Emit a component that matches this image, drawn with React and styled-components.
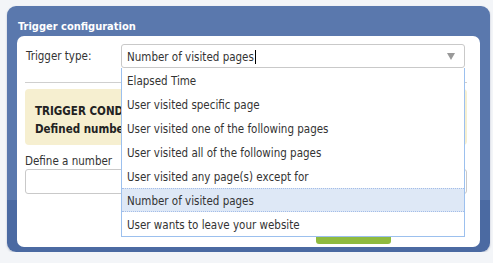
import React from 'react';
import styled, { createGlobalStyle } from 'styled-components';

const GlobalStyle = createGlobalStyle`
  html, body {
    margin: 0;
    padding: 0;
    background: #f3f5f8;
  }
  body {
    font-family: "DejaVu Sans Condensed", "DejaVu Sans", sans-serif;
    font-size: 11.5px;
    color: #333;
  }
`;

const options = [
  'Elapsed Time',
  'User visited specific page',
  'User visited one of the following pages',
  'User visited all of the following pages',
  'User visited any page(s) except for',
  'Number of visited pages',
  'User wants to leave your website',
];

const App = () => {
  const selected = 'Number of visited pages';

  return (
    <>
      <GlobalStyle />
      <Page>
        <Panel>
          <PanelTitle>Trigger configuration</PanelTitle>
          <PanelBody>
            <TypeRow>
              <Label>Trigger type:</Label>
              <SelectWrap>
                <Select>
                  <span>{selected}</span>
                  <Caret />
                  <Arrow />
                </Select>
                <Dropdown>
                  {options.map((o) => (
                    <Option key={o} active={o === selected}>
                      {o}
                    </Option>
                  ))}
                </Dropdown>
              </SelectWrap>
            </TypeRow>
            <Divider />
            <Alert>
              <div>TRIGGER CONDITION</div>
              <div>Defined number of visited pages</div>
            </Alert>
            <FieldLabel>Define a number</FieldLabel>
            <Input />
            <Footer>
              <SaveButton>Save</SaveButton>
            </Footer>
          </PanelBody>
        </Panel>
      </Page>
    </>
  );
};

export default App;

const Page = styled.div`
  padding: 6px 3px 0 7px;
  width: 483px;
`;

const Panel = styled.div`
  height: 246px;
  box-sizing: border-box;
  padding: 0 10px 5px 10px;
  border-radius: 9px;
  background: linear-gradient(#5a78ad 0, #5a78ad 194px, #4b6aa2 194px);
  box-shadow: 0 1px 2px rgba(60, 80, 120, 0.35);
  display: flex;
  flex-direction: column;
`;

const PanelTitle = styled.div`
  height: 30px;
  box-sizing: border-box;
  padding: 14px 0 0 1px;
  color: #fff;
  font-weight: bold;
  font-size: 11px;
  line-height: 14px;
`;

const PanelBody = styled.div`
  flex: 1;
  background: #fff;
  border-radius: 7px;
  padding: 8px 13px 0 8px;
  display: flex;
  flex-direction: column;
`;

const TypeRow = styled.div`
  display: flex;
  align-items: center;
  height: 24px;
`;

const Label = styled.div`
  width: 95px;
  padding-left: 1px;
  margin-top: -1px;
`;

const SelectWrap = styled.div`
  position: relative;
  flex: 1;
  margin-right: 2px;
`;

const Select = styled.div`
  height: 24px;
  box-sizing: border-box;
  border: 1px solid #c9c9c9;
  border-radius: 3px;
  padding: 2px 0 0 5px;
  display: flex;
  align-items: center;
  background: #fff;
`;

const Caret = styled.span`
  width: 1px;
  height: 14px;
  background: #000;
  margin-left: 1px;
`;

const Arrow = styled.span`
  margin-left: auto;
  margin-right: 9px;
  margin-top: -2px;
  width: 0;
  height: 0;
  border-left: 4px solid transparent;
  border-right: 4px solid transparent;
  border-top: 7px solid #999;
`;

const Dropdown = styled.div`
  position: absolute;
  top: 24px;
  left: 0;
  right: 0;
  z-index: 2;
  background: #fff;
  border: 1px solid #9cc0ee;
  border-top: none;
`;

const Option = styled.div`
  height: 24px;
  box-sizing: border-box;
  padding: 2px 0 0 5px;
  display: flex;
  align-items: center;
  white-space: nowrap;
  background: ${(p) => (p.active ? '#dee8f6' : '#fff')};
  border: 1px dotted ${(p) => (p.active ? '#a4bde8' : 'transparent')};
  border-left: none;
  border-right: none;
`;

const Divider = styled.div`
  height: 1px;
  background: #cfcfcf;
  margin: 14px 0 6px;
`;

const Alert = styled.div`
  height: 56px;
  box-sizing: border-box;
  background: #f6efd0;
  border-radius: 4px;
  padding: 13px 10px 0;
  font-weight: bold;
  line-height: 18px;
  color: #222;
  white-space: nowrap;
  overflow: hidden;
`;

const FieldLabel = styled.div`
  margin-top: 9px;
  line-height: 14px;
`;

const Input = styled.div`
  margin-top: 1px;
  height: 23px;
  border: 1px solid #c9c9c9;
  border-radius: 3px;
`;

const Footer = styled.div`
  display: flex;
  justify-content: flex-end;
  padding-right: 76px;
  margin-top: 24px;
`;

const SaveButton = styled.div`
  width: 75px;
  height: 26px;
  border-radius: 3px;
  background: #8fba3f;
  color: #fff;
  display: flex;
  align-items: center;
  justify-content: center;
  font-weight: bold;
`;
